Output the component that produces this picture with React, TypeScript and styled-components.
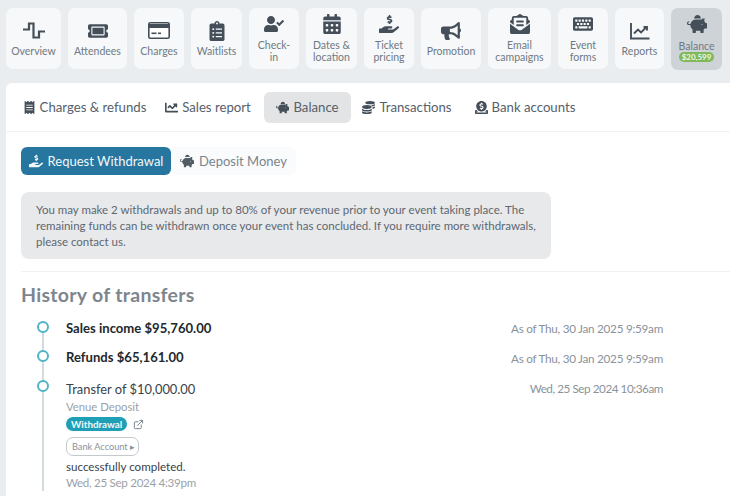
import React from "react";
import styled, { createGlobalStyle } from "styled-components";
import {
  FaBullhorn, FaCalendarAlt, FaChartLine, FaClipboardList, FaCoins, FaDonate, FaEnvelopeOpenText,
  FaHandHoldingUsd, FaKeyboard, FaPiggyBank, FaReceipt, FaTicketAlt, FaUserCheck,
} from "react-icons/fa";
import { FiExternalLink } from "react-icons/fi";

const Global = createGlobalStyle`
  html, body { margin: 0; padding: 0; background: #e9edef; }
  body { font-family: "Lato", "Noto Sans", sans-serif; width: 730px; height: 496px; overflow: hidden; }
`;

const Page = styled.div`
  width: 730px;
  height: 496px;
  overflow: hidden;
  background: #e9edef;
`;
const NavBar = styled.nav`
  display: flex;
  gap: 7px;
  height: 83px;
  box-sizing: border-box;
  padding: 8px 0 0 6px;
  align-items: flex-start;
`;
const Tile = styled.a<{ $w: number; $active?: boolean }>`
  width: ${(p) => p.$w}px;
  height: ${(p) => (p.$active ? 62 : 61)}px;
  flex: none;
  box-sizing: border-box;
  display: flex;
  flex-direction: column;
  align-items: center;
  border-radius: 7px;
  background: ${(p) => (p.$active ? "#ced3d7" : "#f6f8f9")};
  color: #6f7a83;
  font-size: 10.5px;
  line-height: 12px;
  text-align: center;
  padding-top: 3px;
`;
const TileIcon = styled.div<{ $single?: boolean; $low?: boolean }>`
  height: 25px;
  margin-top: ${(p) => (p.$single ? 7 : 0)}px;
  margin-bottom: ${(p) => (p.$single ? 2 : p.$low ? 4 : 3)}px;
  display: flex;
  align-items: center;
  justify-content: center;
  color: #444f59;
  font-size: 20px;
`;
const Badge = styled.span`
  background: #7fb95a;
  color: #eef7e6;
  font-size: 8px;
  font-weight: 700;
  line-height: 10px;
  padding: 0 3px;
  border-radius: 6px;
`;
const Panel = styled.main`
  margin-left: 6px;
  background: #fff;
  height: 413px;
  border-top-left-radius: 6px;
`;
const Tabs = styled.div`
  height: 49px;
  box-sizing: border-box;
  border-bottom: 1px solid #f1f3f4;
  display: flex;
  align-items: center;
  padding: 0 0 0 11px;
`;
const Tab = styled.a<{ $w: number; $active?: boolean }>`
  width: ${(p) => p.$w}px;
  height: 31px;
  flex: none;
  box-sizing: border-box;
  display: flex;
  align-items: center;
  justify-content: center;
  gap: 4px;
  border-radius: 6px;
  background: ${(p) => (p.$active ? "#e3e4e6" : "transparent")};
  color: #56616b;
  font-size: 13.2px;
  svg { color: #444f59; font-size: 13px; flex: none; }
`;
const Body = styled.div`
  padding: 15px 0 0 15px;
`;
const Buttons = styled.div`
  display: flex;
`;
const Button = styled.a<{ $primary?: boolean }>`
  height: 28px;
  width: ${(p) => (p.$primary ? 150 : 125)}px;
  box-sizing: border-box;
  display: flex;
  align-items: center;
  justify-content: center;
  gap: 5px;
  padding-bottom: 1px;
  border-radius: 6px;
  font-size: 13px;
  background: ${(p) => (p.$primary ? "#26769f" : "#fafbfc")};
  color: ${(p) => (p.$primary ? "#f2f7fa" : "#7b858d")};
  svg { font-size: 14px; color: ${(p) => (p.$primary ? "#f2f7fa" : "#525c65")}; }
`;
const Alert = styled.div`
  width: 530px;
  height: 67px;
  box-sizing: border-box;
  margin-top: 17px;
  padding: 10px 15px;
  border-radius: 8px;
  background: #e8e9eb;
  color: #5d6770;
  font-size: 11.5px;
  line-height: 16px;
`;
const Rule = styled.hr`
  margin: 12px 0 0;
  border: 0;
  border-top: 1px solid #eef0f1;
`;
const Heading = styled.h2`
  margin: 11px 0 0;
  font-size: 19.5px;
  line-height: 24px;
  font-weight: 700;
  color: #7d868e;
  letter-spacing: 0.3px;
`;
const Timeline = styled.ul`
  list-style: none;
  margin: 11px 0 0;
  padding: 0;
  width: 642px;
`;
const Item = styled.li<{ $h: number }>`
  position: relative;
  height: ${(p) => p.$h}px;
  padding-left: 45px;
  display: flex;
  justify-content: space-between;
  align-items: flex-start;
  &::before {
    content: "";
    position: absolute;
    left: 21px;
    top: 9px;
    bottom: -9px;
    width: 2px;
    background: #d3dade;
  }
  &:last-child::before {
    bottom: 0;
  }
  &::after {
    content: "";
    position: absolute;
    left: 16px;
    top: 3px;
    width: 8px;
    height: 8px;
    border: 2px solid #4fb4c6;
    border-radius: 50%;
    background: #fff;
  }
`;
const Strong = styled.div`
  font-size: 13.1px;
  line-height: 18px;
  margin-top: 1px;
  font-weight: 700;
  color: #22282d;
`;
const Plain = styled.div`
  font-size: 12.9px;
  line-height: 18px;
  margin-top: 3px;
  color: #3a4249;
`;
const When = styled.div`
  font-size: 11.7px;
  line-height: 18px;
  margin-top: 1px;
  letter-spacing: -0.26px;
  color: #8a929a;
`;
const WhenOffset = styled(When)`
  margin-top: 2px;
`;
const WhenNarrow = styled(WhenOffset)`
  letter-spacing: -0.44px;
`;
const Sub = styled.div`
  font-size: 11.3px;
  line-height: 17px;
  color: #9aa2a9;
`;
const Stamp = styled(Sub)`
  font-size: 11.6px;
  letter-spacing: -0.3px;
  line-height: 16px;
`;
const TagRow = styled.div`
  display: flex;
  align-items: center;
  gap: 6px;
  margin-top: 2px;
`;
const Tag = styled.span`
  background: #1f9fb5;
  color: #eefafc;
  font-size: 9.8px;
  font-weight: 700;
  line-height: 14px;
  padding: 0 5px;
  border-radius: 7px;
`;
const LinkIcon = styled.span`
  color: #6f7a83;
  font-size: 11px;
  display: flex;
`;
const Chip = styled.span`
  display: block;
  box-sizing: border-box;
  margin-top: 6px;
  border: 1px solid #c4c9cd;
  border-radius: 7px;
  padding: 0 5px;
  width: 73px;
  height: 19px;
  line-height: 17px;
  font-size: 9.2px;
  white-space: nowrap;
  color: #8a929a;
`;
const Done = styled.div`
  font-size: 11.6px;
  line-height: 16px;
  margin-top: 3px;
  color: #3a4249;
`;
const Column = styled.div`
  display: flex;
  flex-direction: column;
  align-items: flex-start;
`;

const Pulse = () => (
  <svg width="24" height="20" viewBox="0 0 24 20" fill="none" stroke="#444f59" strokeWidth="2.2">
    <path d="M1 8.5h6V2.5h4.5V16.5H17V10.5h6" />
  </svg>
);
const Card = () => (
  <svg width="22" height="17" viewBox="0 0 22 17">
    <rect x="0.8" y="0.8" width="20.4" height="15.4" rx="1.5" fill="#fff" stroke="#444f59" strokeWidth="1.6" />
    <rect x="1" y="2" width="20" height="4" fill="#444f59" />
    <rect x="3.5" y="10.5" width="5" height="1.6" fill="#444f59" />
    <rect x="10" y="10.5" width="3" height="1.6" fill="#444f59" />
  </svg>
);
const Reports = () => (
  <svg width="20" height="18" viewBox="0 0 20 18" fill="none" stroke="#444f59" strokeWidth="1.9">
    <path d="M1 1v15.5h18.5" />
    <path d="M4 11.5l4-4 3 3 5.5-5.5" />
    <path d="M13.5 5h3.5v3.5" />
  </svg>
);

const tiles: { w: number; label: React.ReactNode; icon: React.ReactNode; two?: boolean }[] = [
  { w: 55, label: "Overview", icon: <Pulse /> },
  { w: 59, label: "Attendees", icon: <FaTicketAlt /> },
  { w: 50, label: "Charges", icon: <Card /> },
  { w: 51, label: "Waitlists", icon: <FaClipboardList /> },
  { w: 50, label: <>Check-<br />in</>, icon: <FaUserCheck />, two: true },
  { w: 51, label: <>Dates &amp;<br />location</>, icon: <FaCalendarAlt />, two: true },
  { w: 50, label: <>Ticket<br />pricing</>, icon: <FaHandHoldingUsd />, two: true },
  { w: 60, label: "Promotion", icon: <FaBullhorn /> },
  { w: 63, label: <>Email<br />campaigns</>, icon: <FaEnvelopeOpenText />, two: true },
  { w: 50, label: <>Event<br />forms</>, icon: <FaKeyboard />, two: true },
  { w: 49, label: "Reports", icon: <Reports /> },
];

export default function App() {
  return (
    <Page>
      <Global />
      <NavBar>
        {tiles.map((t, i) => (
          <Tile key={i} $w={t.w}>
            <TileIcon $single={!t.two}>{t.icon}</TileIcon>
            <div>{t.label}</div>
          </Tile>
        ))}
        <Tile $w={51} $active>
          <TileIcon $low><FaPiggyBank /></TileIcon>
          <div>Balance</div>
          <Badge>$20,599</Badge>
        </Tile>
      </NavBar>
      <Panel>
        <Tabs>
          <Tab $w={135}><FaReceipt />Charges &amp; refunds</Tab>
          <Tab $w={112}><FaChartLine />Sales report</Tab>
          <Tab $w={87} $active><FaPiggyBank />Balance</Tab>
          <Tab $w={112}><FaCoins />Transactions</Tab>
          <Tab $w={124}><FaDonate />Bank accounts</Tab>
        </Tabs>
        <Body>
          <Buttons>
            <Button $primary><FaHandHoldingUsd />Request Withdrawal</Button>
            <Button><FaPiggyBank />Deposit Money</Button>
          </Buttons>
          <Alert>
            You may make 2 withdrawals and up to 80% of your revenue prior to your event taking place. The
            remaining funds can be withdrawn once your event has concluded. If you require more withdrawals,
            please contact us.
          </Alert>
          <Rule />
          <Heading>History of transfers</Heading>
          <Timeline>
            <Item $h={29}>
              <Strong>Sales income $95,760.00</Strong>
              <When>As of Thu, 30 Jan 2025 9:59am</When>
            </Item>
            <Item $h={30}>
              <Strong>Refunds $65,161.00</Strong>
              <WhenOffset>As of Thu, 30 Jan 2025 9:59am</WhenOffset>
            </Item>
            <Item $h={114}>
              <Column>
                <Plain>Transfer of $10,000.00</Plain>
                <Sub>Venue Deposit</Sub>
                <TagRow>
                  <Tag>Withdrawal</Tag>
                  <LinkIcon><FiExternalLink /></LinkIcon>
                </TagRow>
                <Chip>Bank Account ▸</Chip>
                <Done>successfully completed.</Done>
                <Stamp>Wed, 25 Sep 2024 4:39pm</Stamp>
              </Column>
              <WhenNarrow>Wed, 25 Sep 2024 10:36am</WhenNarrow>
            </Item>
          </Timeline>
        </Body>
      </Panel>
    </Page>
  );
}
